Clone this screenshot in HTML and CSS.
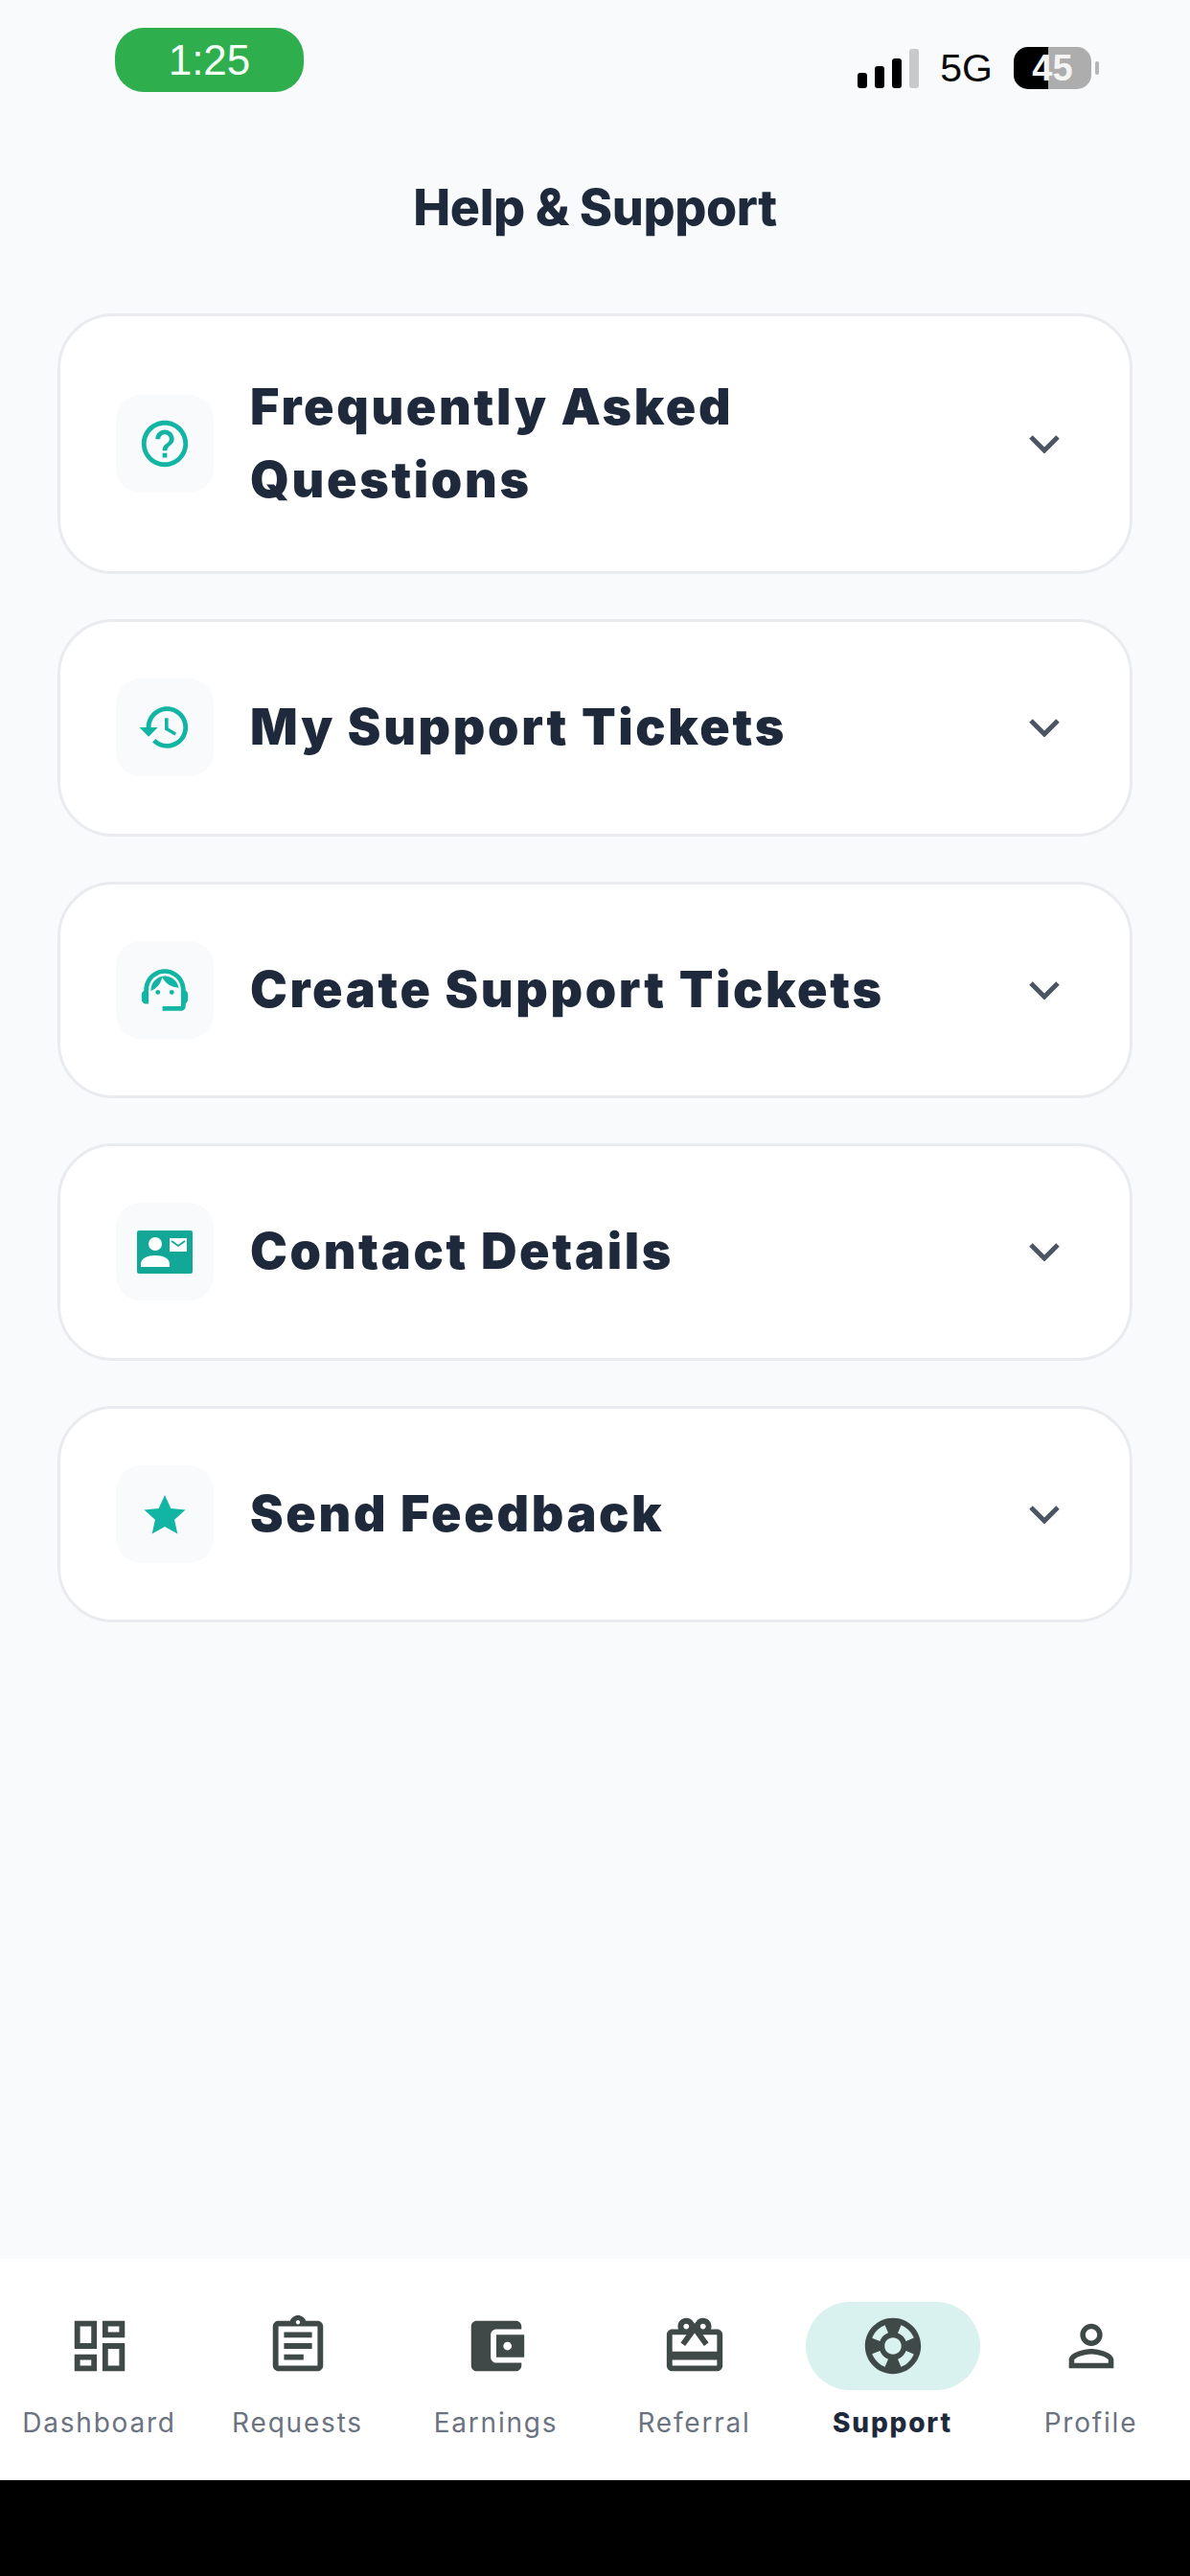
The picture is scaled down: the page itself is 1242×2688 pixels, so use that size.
FILE: index.html
```html
<!DOCTYPE html>
<html>
<head>
<meta charset="utf-8">
<title>Help &amp; Support</title>
<link rel="stylesheet" href="styles.css">
</head>
<body>
<div class="status">
	<div class="clock">1:25</div>
	<div class="status-right">
		<div class="signal"><i class="b1"></i><i class="b2"></i><i class="b3"></i><i class="b4"></i></div>
		<span class="net">5G</span>
		<div class="battery">45</div>
		<div class="battery-tip"></div>
	</div>
</div>

<h1 class="title">Help &amp; Support</h1>

<div class="list">
	<div class="card">
		<div class="icon-box">
			<svg width="58" height="58" viewBox="0 0 24 24"><path fill="#12b5a3" d="M11 18h2v-2h-2v2zm1-16C6.48 2 2 6.48 2 12s4.480 10 10 10 10-4.480 10-10S17.520 2 12 2zm0 18c-4.410 0-8-3.590-8-8s3.590-8 8-8 8 3.590 8 8-3.590 8-8 8zm0-14c-2.210 0-4 1.790-4 4h2c0-1.100.9-2 2-2s2 .9 2 2c0 2-3 1.750-3 5h2c0-2.250 3-2.500 3-5 0-2.210-1.790-4-4-4z"/></svg>
		</div>
		<div class="card-text">Frequently Asked Questions</div>
		<svg class="chev" width="32" height="20" viewBox="0 0 32 20"><path d="M2 3l14 14L30 3" fill="none" stroke="#4b5563" stroke-width="5"/></svg>
	</div>
	<div class="card">
		<div class="icon-box">
			<svg width="58" height="58" viewBox="0 0 24 24"><path fill="#12b5a3" d="M13 3c-4.970 0-9 4.030-9 9H1l4 4 4-4H6c0-3.870 3.130-7 7-7s7 3.130 7 7-3.130 7-7 7c-1.930 0-3.680-.79-4.940-2.060l-1.420 1.420C8.270 19.990 10.510 21 13 21c4.970 0 9-4.030 9-9s-4.030-9-9-9zm-1 5v5l4.280 2.540.72-1.210-3.500-2.080V8H12z"/></svg>
		</div>
		<div class="card-text">My Support Tickets</div>
		<svg class="chev" width="32" height="20" viewBox="0 0 32 20"><path d="M2 3l14 14L30 3" fill="none" stroke="#4b5563" stroke-width="5"/></svg>
	</div>
	<div class="card">
		<div class="icon-box">
			<svg width="58" height="58" viewBox="0 0 24 24" fill="#12b5a3">
				<path d="M21 12.220C21 6.730 16.740 3 12 3c-4.690 0-9 3.650-9 9.280-.6.34-1 .98-1 1.720v2c0 1.100.9 2 2 2h1v-6.100c0-3.870 3.130-7 7-7s7 3.130 7 7V19h-8v2h8c1.100 0 2-.9 2-2v-1.220c.59-.31 1-.92 1-1.620v-2.300c0-.67-.41-1.280-1-1.640z"/>
				<circle cx="9" cy="13" r="1"/>
				<circle cx="15" cy="13" r="1"/>
				<path d="M18 11.030C17.520 8.180 15.040 6 12.050 6c-3.030 0-6.290 2.510-6.030 6.450 2.470-1.010 4.330-3.210 4.860-5.890 1.310 2.630 4 4.440 7.120 4.470z"/>
			</svg>
		</div>
		<div class="card-text">Create Support Tickets</div>
		<svg class="chev" width="32" height="20" viewBox="0 0 32 20"><path d="M2 3l14 14L30 3" fill="none" stroke="#4b5563" stroke-width="5"/></svg>
	</div>
	<div class="card">
		<div class="icon-box">
			<svg width="58" height="45" viewBox="0 0 58 45">
				<rect width="58" height="45" rx="2" fill="#12a797"/>
				<circle cx="19" cy="14" r="7" fill="#fff"/>
				<path d="M4 38v-3c0-6 7-9 15-9s15 3 15 9v3z" fill="#fff"/>
				<rect x="34" y="8" width="18" height="14" fill="#fff"/>
				<path d="M36 11l7 5 7-5" fill="none" stroke="#12a797" stroke-width="1.800"/>
			</svg>
		</div>
		<div class="card-text">Contact Details</div>
		<svg class="chev" width="32" height="20" viewBox="0 0 32 20"><path d="M2 3l14 14L30 3" fill="none" stroke="#4b5563" stroke-width="5"/></svg>
	</div>
	<div class="card">
		<div class="icon-box">
			<svg width="44" height="42" viewBox="0 0 44 42"><path fill="#12b5a3" d="M22 1l6.300 14 15.200 1.600-11.400 10.100L35.300 41.500 22 33.900 8.700 41.500l3.200-14.800L.5 16.600 15.700 15z"/></svg>
		</div>
		<div class="card-text">Send Feedback</div>
		<svg class="chev" width="32" height="20" viewBox="0 0 32 20"><path d="M2 3l14 14L30 3" fill="none" stroke="#4b5563" stroke-width="5"/></svg>
	</div>
</div>

<div class="nav">
	<div class="nav-item">
		<div class="nav-icon">
			<svg width="70" height="70" viewBox="0 0 24 24"><path d="M19 5v2h-4V5h4M9 5v6H5V5h4m10 8v6h-4v-6h4M9 17v2H5v-2h4M21 3h-8v6h8V3zM11 3H3v10h8V3zm10 8h-8v10h8V11zm-10 4H3v6h8v-6z"/></svg>
		</div>
		<span class="nav-label">Dashboard</span>
	</div>
	<div class="nav-item">
		<div class="nav-icon">
			<svg width="70" height="70" viewBox="0 0 24 24"><path d="M19 3h-4.180C14.400 1.840 13.300 1 12 1c-1.300 0-2.400.84-2.820 2H5c-.14 0-.27.01-.4.04-.39.08-.74.28-1.010.55-.18.18-.33.4-.43.64-.1.23-.16.49-.16.77v14c0 .27.06.54.16.78s.25.45.43.64c.27.27.62.47 1.010.55.13.02.26.03.4.03h14c1.100 0 2-.9 2-2V5c0-1.100-.9-2-2-2zm-7-.25c.41 0 .75.34.75.75s-.34.75-.75.75-.75-.34-.75-.75.34-.75.75-.75zM19 19H5V5h14v14zM7 15h7v2H7zm0-4h10v2H7zm0-4h10v2H7z"/></svg>
		</div>
		<span class="nav-label">Requests</span>
	</div>
	<div class="nav-item">
		<div class="nav-icon">
			<svg width="70" height="70" viewBox="0 0 24 24"><path d="M21 18v1c0 1.100-.9 2-2 2H5c-1.110 0-2-.9-2-2V5c0-1.100.89-2 2-2h14c1.100 0 2 .9 2 2v1h-9c-1.110 0-2 .9-2 2v8c0 1.100.89 2 2 2h9zm-9-2h10V8H12v8zm4-2.500c-.83 0-1.500-.67-1.500-1.500s.67-1.500 1.500-1.500 1.500.67 1.500 1.500-.67 1.500-1.500 1.500z"/></svg>
		</div>
		<span class="nav-label">Earnings</span>
	</div>
	<div class="nav-item">
		<div class="nav-icon">
			<svg width="70" height="70" viewBox="0 0 24 24"><path d="M20 6h-2.180c.11-.31.18-.65.18-1 0-1.660-1.340-3-3-3-1.050 0-1.960.54-2.500 1.350l-.5.67-.5-.68C10.960 2.540 10.050 2 9 2 7.340 2 6 3.340 6 5c0 .35.07.69.18 1H4c-1.110 0-1.990.89-1.990 2L2 19c0 1.110.89 2 2 2h16c1.110 0 2-.89 2-2V8c0-1.110-.89-2-2-2zm-5-2c.55 0 1 .45 1 1s-.45 1-1 1-1-.45-1-1 .45-1 1-1zM9 4c.55 0 1 .45 1 1s-.45 1-1 1-1-.45-1-1 .45-1 1-1zm11 15H4v-2h16v2zm0-5H4V8h5.080L7 10.830 8.620 12 11 8.760l1-1.360 1 1.360L15.380 12 17 10.830 14.920 8H20v6z"/></svg>
		</div>
		<span class="nav-label">Referral</span>
	</div>
	<div class="nav-item active">
		<div class="nav-icon">
			<svg width="70" height="70" viewBox="0 0 24 24"><path d="M12 2C6.480 2 2 6.480 2 12s4.480 10 10 10 10-4.480 10-10S17.520 2 12 2zm7.460 7.120-2.780 1.150c-.51-1.360-1.580-2.440-2.950-2.940l1.150-2.780c2.100.8 3.770 2.470 4.580 4.570zM12 15c-1.660 0-3-1.340-3-3s1.340-3 3-3 3 1.340 3 3-1.340 3-3 3zM9.130 4.540l1.170 2.780c-1.380.5-2.470 1.590-2.980 2.970L4.540 9.130c.81-2.110 2.480-3.780 4.590-4.590zM4.540 14.870l2.780-1.150c.51 1.380 1.590 2.460 2.970 2.960l-1.170 2.780c-2.100-.81-3.770-2.480-4.580-4.590zm10.340 4.590-1.150-2.780c1.370-.51 2.450-1.590 2.950-2.970l2.780 1.170c-.81 2.100-2.480 3.770-4.580 4.580z"/></svg>
		</div>
		<span class="nav-label">Support</span>
	</div>
	<div class="nav-item">
		<div class="nav-icon">
			<svg width="70" height="70" viewBox="0 0 24 24"><path d="M12 5.900c1.160 0 2.100.94 2.100 2.100s-.94 2.100-2.100 2.100S9.900 9.160 9.900 8s.94-2.100 2.100-2.100m0 9c2.970 0 6.100 1.460 6.100 2.100v1.100H5.900V17c0-.64 3.130-2.100 6.100-2.100M12 4C9.790 4 8 5.790 8 8s1.790 4 4 4 4-1.790 4-4-1.790-4-4-4zm0 9c-2.670 0-8 1.340-8 4v3h16v-3c0-2.660-5.330-4-8-4z"/></svg>
		</div>
		<span class="nav-label">Profile</span>
	</div>
</div>
<div class="home-area"></div>
</body>
</html>
```

FILE: styles.css
```css
* { box-sizing: border-box; }

body
{
margin: 0;
height: 2688px;
display: flex;
flex-direction: column;
background-color: #f8fafc;
font-family: Inter, 'Liberation Sans', sans-serif;
color: #1e293b;
}

/* status bar */
.status
{
display: flex;
justify-content: space-between;
align-items: flex-start;
padding: 29px 95px 0 120px;
height: 180px;
}
.clock
{
width: 197px;
height: 67px;
border-radius: 30px;
background-color: #2fae4e;
color: #f4fff6;
font-family: 'Liberation Sans', sans-serif;
font-size: 44px;
line-height: 67px;
text-align: center;
}
.status-right
{
display: flex;
align-items: center;
margin-top: 20px;
height: 44px;
}
.signal
{
display: flex;
align-items: flex-end;
gap: 8px;
height: 42px;
}
.signal i
{
display: block;
width: 10px;
background-color: #000;
border-radius: 3px;
}
.signal .b1 { height: 16px; }
.signal .b2 { height: 23px; }
.signal .b3 { height: 31px; }
.signal .b4 { height: 41px; background-color: #c9c9c9; }
.net
{
margin-left: 22px;
font-family: 'Liberation Sans', sans-serif;
font-size: 41px;
color: #0a0a0a;
}
.battery
{
margin-left: 22px;
width: 81px;
height: 44px;
border-radius: 15px;
background: linear-gradient(to right, #000 0, #000 45%, #adadad 45%, #adadad 100%);
color: #f4f4f4;
font-family: 'Liberation Sans', sans-serif;
font-weight: bold;
font-size: 38px;
line-height: 44px;
text-align: center;
}
.battery-tip
{
margin-left: 4px;
width: 4px;
height: 14px;
border-radius: 2px;
background-color: #b5b5b5;
}

.title
{
margin: 0;
height: 147px;
padding-top: 5px;
font-size: 52px;
line-height: 64px;
font-weight: 800;
letter-spacing: -0.4px;
text-align: center;
}

/* accordion cards */
.list
{
flex: 1;
display: flex;
flex-direction: column;
gap: 47px;
padding: 0 60px;
}
.card
{
display: flex;
align-items: center;
min-height: 226.5px;
padding: 57px 73px 57px 58px;
background-color: #fff;
border: 3px solid #e9ebee;
border-radius: 58px;
}
.icon-box
{
flex: none;
width: 102px;
height: 102px;
display: flex;
align-items: center;
justify-content: center;
background-color: #f8fafc;
border-radius: 26px;
}
.card-text
{
flex: 1;
margin: 0 62px 0 38px;
font-size: 52px;
line-height: 76px;
font-weight: 900;
letter-spacing: 2.65px;
}
.chev { flex: none; }

/* bottom nav */
.nav
{
display: grid;
grid-template-columns: repeat(6, 1fr);
height: 231px;
padding: 45px 0 0;
background-color: #fff;
}
.nav-item
{
display: flex;
flex-direction: column;
align-items: center;
}
.nav-icon
{
width: 182px;
height: 92px;
display: flex;
align-items: center;
justify-content: center;
border-radius: 46px;
fill: #3f4947;
}
.nav-label
{
margin-top: 16px;
font-size: 28px;
line-height: 36px;
letter-spacing: 1.8px;
color: #6b7280;
}
.active .nav-icon { background-color: #d9f2ef; }
.active .nav-label { font-weight: 800; color: #1e293b; }

.home-area
{
height: 100px;
background-color: #000;
}
```
